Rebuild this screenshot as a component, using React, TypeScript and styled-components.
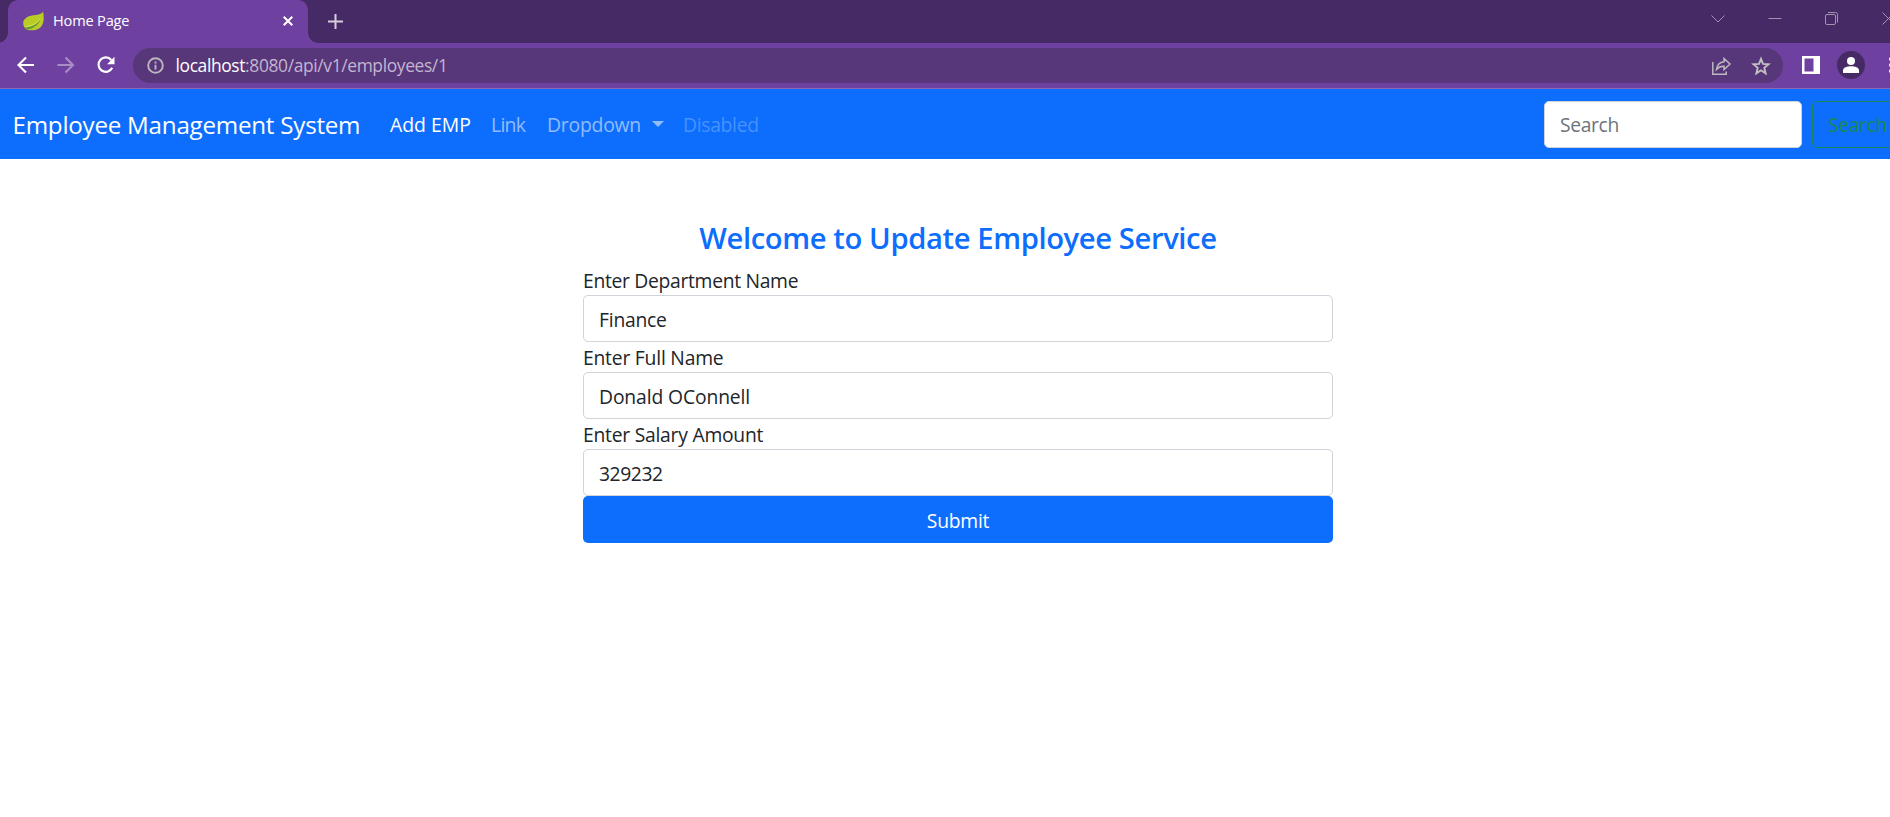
import React from "react";
import styled, { createGlobalStyle, css } from "styled-components";

const c = {
  strip: "#462a65",
  bar: "#6e41a1",
  omnibox: "#573679",
  blue: "#0d6efd",
  text: "#212529",
  border: "#ced4da",
  green: "#198754",
};

const GlobalStyle = createGlobalStyle`
  *, *::before, *::after { box-sizing: border-box; }
  html, body { margin: 0; background: #fff; overflow: hidden; }
  body { font-family: "Segoe UI", "Open Sans", "Noto Sans", sans-serif; color: ${c.text}; }
  svg { display: block; flex: none; }
`;

const Window = styled.div`
  width: 1890px;
  height: 817px;
  overflow: hidden;
  display: flex;
  flex-direction: column;
`;

const TabStrip = styled.div`
  height: 43px;
  background: ${c.strip};
  display: flex;
  justify-content: space-between;
  padding-left: 8px;
`;

const TabGroup = styled.div`
  display: flex;
`;

const Tab = styled.div`
  position: relative;
  width: 300px;
  height: 43px;
  padding: 0 15px 1px;
  display: flex;
  align-items: center;
  background: ${c.bar};
  border-radius: 10px 10px 0 0;
  &::before, &::after {
    content: "";
    position: absolute;
    bottom: 0;
    width: 10px;
    height: 10px;
  }
  &::before {
    left: -10px;
    background: radial-gradient(circle at 0 0, transparent 9.5px, ${c.bar} 10px);
  }
  &::after {
    right: -10px;
    background: radial-gradient(circle at 100% 0, transparent 9.5px, ${c.bar} 10px);
  }
`;

const TabTitle = styled.span`
  flex: 1;
  margin-left: 9px;
  font-size: 14.6px;
  letter-spacing: -0.19px;
  line-height: 20px;
  padding-bottom: 2px;
  color: #fff;
`;

const NewTab = styled.div`
  margin: 14px 0 0 20px;
`;

const WindowControls = styled.div`
  display: flex;
  gap: 43px;
  padding-top: 12px;
  margin-right: -6px;
`;

const Toolbar = styled.div`
  height: 46px;
  background: ${c.bar};
  border-bottom: 1px solid #8d67b4;
  display: flex;
  align-items: center;
  flex: none;
  padding-left: 16px;
`;

const ToolButtons = styled.div`
  display: flex;
  flex: none;
  gap: 20px;
  width: 117px;
  padding-bottom: 2px;
`;

const Omnibox = styled.div`
  width: 1650px;
  flex: none;
  height: 35px;
  border-radius: 18px;
  background: ${c.omnibox};
  display: flex;
  align-items: center;
  padding: 0 12px 0 13px;
`;

const Url = styled.div`
  flex: 1;
  margin-left: 10.5px;
  padding-bottom: 1px;
  font-size: 17.4px;
  line-height: 24px;
  letter-spacing: -0.36px;
  color: #c3b5d0;
  b { font-weight: 400; color: #fff; }
`;

const OmniActions = styled.div`
  display: flex;
  gap: 19px;
`;

const ProfileArea = styled.div`
  display: flex;
  align-items: center;
  margin-left: 19px;
  padding-bottom: 1px;
  flex: none;
`;

const Avatar = styled.div`
  width: 28px;
  height: 28px;
  margin: 0 24px 0 17px;
  border-radius: 50%;
  background: ${c.strip};
  display: grid;
  place-items: center;
  flex: none;
`;

const Navbar = styled.nav`
  height: 70px;
  flex: none;
  background: ${c.blue};
  display: flex;
  align-items: center;
  padding-left: 12.5px;
`;

const Brand = styled.a`
  width: 356.5px;
  font-size: 24.2px;
  letter-spacing: -0.25px;
  line-height: 36px;
  padding-top: 1px;
  color: #fff;
  white-space: nowrap;
`;

const NavItems = styled.div`
  display: flex;
  align-items: center;
  flex: 1;
  padding: 2px 0 0 21px;
`;

const NavLink = styled.a<{ $tone?: "active" | "disabled"; $width: number; $track: number }>`
  width: ${(p) => p.$width}px;
  display: flex;
  align-items: center;
  font-size: 19.4px;
  line-height: 30px;
  letter-spacing: ${(p) => p.$track}px;
  white-space: nowrap;
  color: ${(p) =>
    p.$tone === "active" ? "#fff" : p.$tone === "disabled" ? "rgba(255,255,255,.25)" : "rgba(255,255,255,.55)"};
`;

const Caret = styled.span`
  margin: 0 0 2px 11px;
  border: 6px solid transparent;
  border-top-color: currentColor;
  border-bottom: 0;
`;

const SearchForm = styled.form`
  display: flex;
  gap: 10px;
  margin: 0 -16px 0 0;
`;

const control = css`
  font-family: inherit;
  font-size: 19.3px;
  line-height: 30px;
  height: 47px;
  border-radius: 5px;
  margin: 0;
`;

const Field = styled.input<{ $track?: number }>`
  ${control}
  display: block;
  width: 100%;
  padding: 2px 15px 0 15px;
  color: ${c.text};
  background: #fff;
  border: 1px solid ${c.border};
  outline: 0;
  letter-spacing: ${(p) => p.$track ?? -0.3}px;
  &::placeholder { color: #6c757d; opacity: 1; }
`;

const SearchField = styled(Field)`
  width: 258px;
  padding-top: 0;
`;

const OutlineButton = styled.button`
  ${control}
  width: 94px;
  padding: 1px 0 0 15px;
  text-align: left;
  letter-spacing: -0.35px;
  color: ${c.green};
  background: transparent;
  border: 1px solid ${c.green};
`;

const Content = styled.main`
  width: 750px;
  margin: 61px 0 0 583px;
  display: flex;
  flex-direction: column;
`;

const Heading = styled.h3`
  margin: 0 0 9px;
  text-align: center;
  font-size: 29.2px;
  font-weight: 600;
  line-height: 36px;
  letter-spacing: -0.39px;
  color: ${c.blue};
`;

const Label = styled.label<{ $track: number }>`
  height: 30px;
  font-size: 19.3px;
  line-height: 31px;
  letter-spacing: ${(p) => p.$track}px;
`;

const SubmitButton = styled.button`
  ${control}
  width: 100%;
  padding: 2px 0 0;
  letter-spacing: -0.25px;
  color: #fff;
  background: ${c.blue};
  border: 0;
`;

const Leaf = () => (
  <svg width="21" height="20" viewBox="0 0 21 20">
    <path d="M20 .5C18 4 14 3.700 9 4.600 3 5.600 0 9 .2 12.500c.1 3 1.800 5 3.300 6 3.500 1.300 9 1.200 12.500-1C21 14.500 21.500 7 20 .5Z" fill="#b9cb25" />
    <path d="M2 16.200c5 .3 11-1.500 15.200-7.700-1.700 6-8 9.500-13.200 10.200L2 16.200Z" fill="#5f9a35" />
    <path d="M2.500 15.500c5.500-.3 10.500-2.500 14-7" fill="none" stroke="#dce66a" strokeWidth=".8" />
  </svg>
);

const controls = [
  "M.5 3.500 7 10 13.500 3.500",
  "M.5 6.500h13",
  "M2 2.500h7q1.500 0 1.500 1.500v7q0 1.500-1.500 1.500h-7q-1.500 0-1.500-1.500v-7q0-1.500 1.500-1.500ZM3 .5h7.500q2 0 2 2V10.500",
  "M.5.5l12 12m0-12-12 12",
];

const fields = [
  { label: "Enter Department Name", track: -0.3, value: "Finance", valueTrack: -0.22 },
  { label: "Enter Full Name", track: -0.21, value: "Donald OConnell", valueTrack: -0.11 },
  { label: "Enter Salary Amount", track: -0.24, value: "329232", valueTrack: -0.4 },
];

export default function App() {
  return (
    <Window>
      <GlobalStyle />
      <TabStrip>
        <TabGroup>
          <Tab>
            <Leaf />
            <TabTitle>Home Page</TabTitle>
            <svg width="10" height="10" viewBox="0 0 10 10" stroke="#fff" strokeWidth="2">
              <path d="m.7.7 8.600 8.600m0-8.600L.7 9.300" />
            </svg>
          </Tab>
          <NewTab>
            <svg width="15" height="15" viewBox="0 0 15 15" stroke="#d5cddd" strokeWidth="2">
              <path d="M7.500 0v15M0 7.500h15" />
            </svg>
          </NewTab>
        </TabGroup>
        <WindowControls>
          {controls.map((d) => (
            <svg key={d} width="14" height="14" viewBox="0 0 14 14" fill="none" stroke="#a294b1">
              <path d={d} />
            </svg>
          ))}
        </WindowControls>
      </TabStrip>

      <Toolbar>
        <ToolButtons>
          <svg width="20" height="20" viewBox="0 0 20 20" fill="none" stroke="#fff" strokeWidth="2.100">
            <path d="M18 10H3M10 2.500 2.500 10l7.500 7.500" />
          </svg>
          <svg width="20" height="20" viewBox="0 0 20 20" fill="none" stroke="#a98dc7" strokeWidth="2.100">
            <path d="M1.500 10h15M9.500 2.500 17 10l-7.500 7.500" />
          </svg>
          <svg width="20" height="20" viewBox="0 0 20 20" fill="none" stroke="#fff" strokeWidth="2.200">
            <path d="M15.300 5A7.200 7.200 0 1 0 16.200 12.800" />
            <path d="M18.500 1.800v7.500H11l7.500-7.500Z" fill="#fff" stroke="none" />
          </svg>
        </ToolButtons>
        <Omnibox>
          <svg width="19" height="19" viewBox="0 0 19 19" fill="none" stroke="#bcb8bf" strokeWidth="1.900">
            <circle cx="9.500" cy="9.500" r="7.300" />
            <path d="M9.500 8.700v4.700M9.500 5.400v2" />
          </svg>
          <Url><b>localhost</b>:8080/api/v1/employees/1</Url>
          <OmniActions>
            <svg width="21" height="20" viewBox="0 0 21 20" fill="none" stroke="#bdb9bf" strokeWidth="1.500">
              <path d="M1.800 6v12.300h13.400V15.500" />
              <path d="M13 2.500 19 8l-6 5.500v-3.200c-3.300-.2-5.600 1-7.500 3.200C6 9.500 8.200 6.200 13 5.700V2.500Z" />
            </svg>
            <svg width="20" height="20" viewBox="0 0 20 20" fill="none" stroke="#c3bfc3" strokeWidth="1.900">
              <path d="m10 2.800 2 5.100 5.500.4-4.200 3.500 1.300 5.500-4.600-3-4.600 3 1.300-5.500-4.200-3.500 5.500-.4L10 2.800Z" />
            </svg>
          </OmniActions>
        </Omnibox>
        <ProfileArea>
          <svg width="18" height="18" viewBox="0 0 18 18">
            <path fillRule="evenodd" fill="#fff" d="M0 0h18v18H0V0Zm2.500 2.500v13h9v-13h-9Z" />
          </svg>
          <Avatar>
            <svg width="16" height="16" viewBox="0 0 16 16" fill="#fff">
              <circle cx="8" cy="4" r="4" />
              <path d="M0 16v-2.500C0 10.600 4 9.300 8 9.300s8 1.300 8 4.200V16H0Z" />
            </svg>
          </Avatar>
          <svg width="4" height="18" viewBox="0 0 4 18" fill="#fff">
            <circle cx="2" cy="3" r="2" />
            <circle cx="2" cy="9" r="2" />
            <circle cx="2" cy="15" r="2" />
          </svg>
        </ProfileArea>
      </Toolbar>

      <Navbar>
        <Brand>Employee Management System</Brand>
        <NavItems>
          <NavLink $tone="active" $width={101} $track={0}>Add EMP</NavLink>
          <NavLink $width={56} $track={-0.7}>Link</NavLink>
          <NavLink $width={136} $track={-0.25}>Dropdown<Caret /></NavLink>
          <NavLink $tone="disabled" $width={80} $track={-0.35}>Disabled</NavLink>
        </NavItems>
        <SearchForm>
          <SearchField placeholder="Search" $track={-0.35} />
          <OutlineButton type="button">Search</OutlineButton>
        </SearchForm>
      </Navbar>

      <Content>
        <Heading>Welcome to Update Employee Service</Heading>
        {fields.map((f) => (
          <React.Fragment key={f.label}>
            <Label $track={f.track}>{f.label}</Label>
            <Field defaultValue={f.value} $track={f.valueTrack} />
          </React.Fragment>
        ))}
        <SubmitButton type="button">Submit</SubmitButton>
      </Content>
    </Window>
  );
}
